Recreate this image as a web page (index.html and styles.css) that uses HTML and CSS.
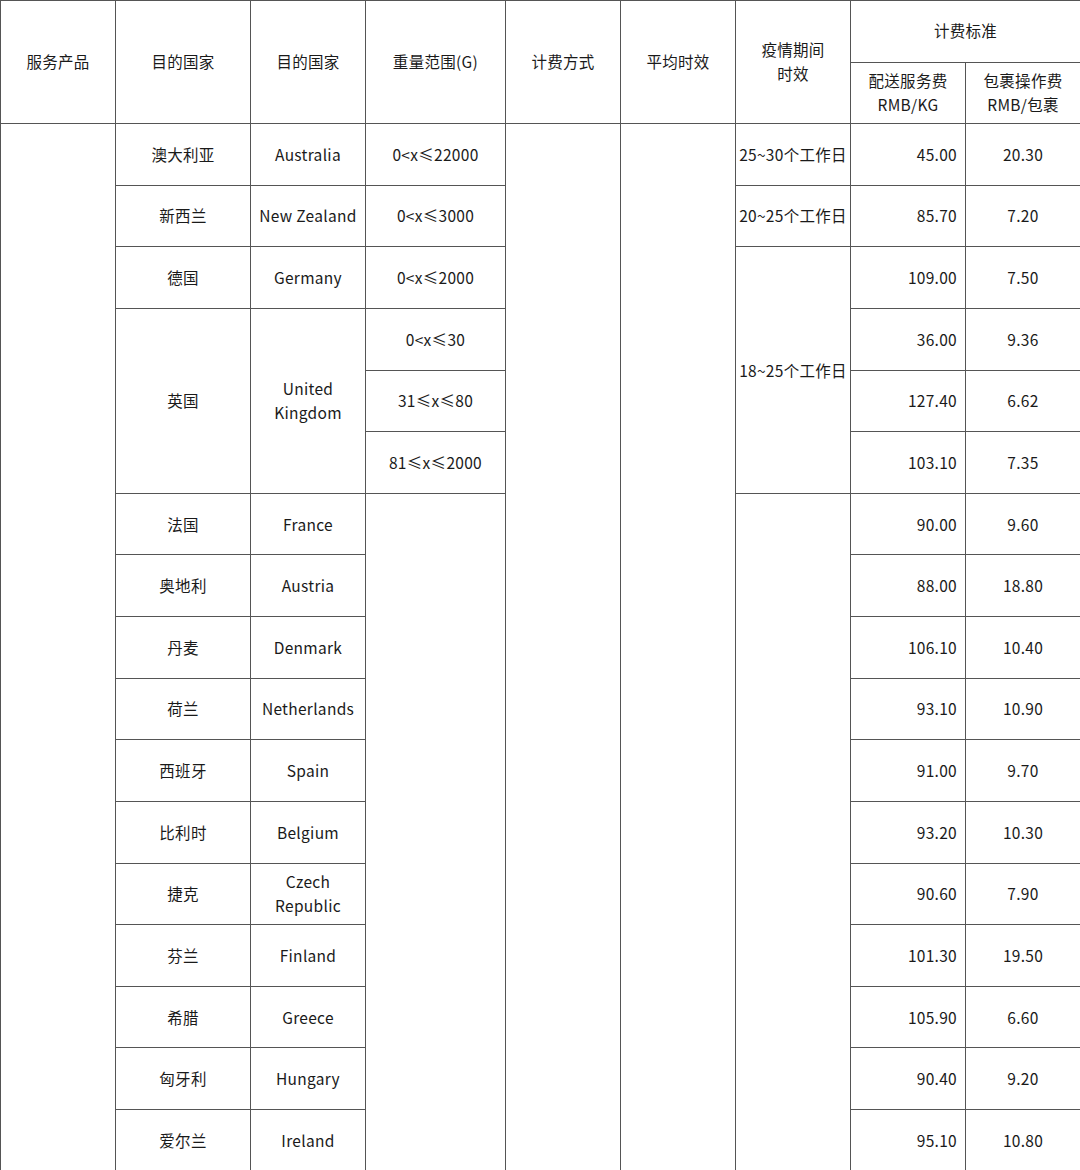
FILE: index.html
```html
<!DOCTYPE html>
<html lang="zh">
<head>
<meta charset="utf-8">
<link rel="stylesheet" href="styles.css">
</head>
<body>
<table class="rates">
<colgroup>
<col class="c1"><col class="c2"><col class="c3"><col class="c4"><col class="c5"><col class="c6"><col class="c7"><col class="c8"><col class="c9">
</colgroup>
<thead>
<tr class="hrow">
<th rowspan="2">服务产品</th>
<th rowspan="2">目的国家</th>
<th rowspan="2">目的国家</th>
<th rowspan="2">重量范围(G)</th>
<th rowspan="2">计费方式</th>
<th rowspan="2">平均时效</th>
<th rowspan="2">疫情期间<br>时效</th>
<th colspan="2" class="top">计费标准</th>
</tr>
<tr class="hrow2">
<th>配送服务费<br>RMB/KG</th>
<th>包裹操作费<br>RMB/包裹</th>
</tr>
</thead>
<tbody>
<tr>
<td rowspan="17"></td>
<td>澳大利亚</td><td>Australia</td><td>0&lt;x≤22000</td>
<td rowspan="17"></td><td rowspan="17"></td>
<td>25~30个工作日</td><td class="num">45.00</td><td>20.30</td>
</tr>
<tr>
<td>新西兰</td><td>New Zealand</td><td>0&lt;x≤3000</td>
<td>20~25个工作日</td><td class="num">85.70</td><td>7.20</td>
</tr>
<tr>
<td>德国</td><td>Germany</td><td>0&lt;x≤2000</td>
<td rowspan="4">18~25个工作日</td><td class="num">109.00</td><td>7.50</td>
</tr>
<tr>
<td rowspan="3">英国</td><td rowspan="3">United<br>Kingdom</td><td>0&lt;x≤30</td>
<td class="num">36.00</td><td>9.36</td>
</tr>
<tr>
<td>31≤x≤80</td><td class="num">127.40</td><td>6.62</td>
</tr>
<tr>
<td>81≤x≤2000</td><td class="num">103.10</td><td>7.35</td>
</tr>
<tr>
<td>法国</td><td>France</td><td rowspan="11"></td><td rowspan="11"></td><td class="num">90.00</td><td>9.60</td>
</tr>
<tr><td>奥地利</td><td>Austria</td><td class="num">88.00</td><td>18.80</td></tr>
<tr><td>丹麦</td><td>Denmark</td><td class="num">106.10</td><td>10.40</td></tr>
<tr><td>荷兰</td><td>Netherlands</td><td class="num">93.10</td><td>10.90</td></tr>
<tr><td>西班牙</td><td>Spain</td><td class="num">91.00</td><td>9.70</td></tr>
<tr><td>比利时</td><td>Belgium</td><td class="num">93.20</td><td>10.30</td></tr>
<tr><td>捷克</td><td>Czech<br>Republic</td><td class="num">90.60</td><td>7.90</td></tr>
<tr><td>芬兰</td><td>Finland</td><td class="num">101.30</td><td>19.50</td></tr>
<tr><td>希腊</td><td>Greece</td><td class="num">105.90</td><td>6.60</td></tr>
<tr><td>匈牙利</td><td>Hungary</td><td class="num">90.40</td><td>9.20</td></tr>
<tr><td>爱尔兰</td><td>Ireland</td><td class="num">95.10</td><td>10.80</td></tr>
</tbody>
</table>
</body>
</html>
```
FILE: styles.css
```css
html, body {
  margin: 0;
  padding: 0;
  background: #ffffff;
}
body {
  font-family: "Noto Sans CJK SC", "Noto Sans", sans-serif;
  font-size: 15.5px;
  letter-spacing: 0.3px;
  color: #1a1a1a;
}
.rates {
  width: 1080px;
  border-collapse: collapse;
  table-layout: fixed;
}
.c1 { width: 115px; }
.c2 { width: 135px; }
.c3 { width: 115px; }
.c4 { width: 140px; }
.c5 { width: 115px; }
.c6 { width: 115px; }
.c7 { width: 115px; }
.c8 { width: 115px; }
.c9 { width: 115px; }
.rates th,
.rates td {
  border: 1px solid #555555;
  padding: 0;
  text-align: center;
  vertical-align: middle;
  font-weight: 400;
  line-height: 24px;
  white-space: nowrap;
}
.rates th {
  padding-bottom: 3px;
}
.hrow {
  height: 62px;
}
.hrow2 {
  height: 61px;
}
.rates tbody tr {
  height: 61.625px;
}
.rates tbody td {
  padding-bottom: 1px;
}
.rates td.num {
  text-align: right;
  padding-right: 8px;
}
```
